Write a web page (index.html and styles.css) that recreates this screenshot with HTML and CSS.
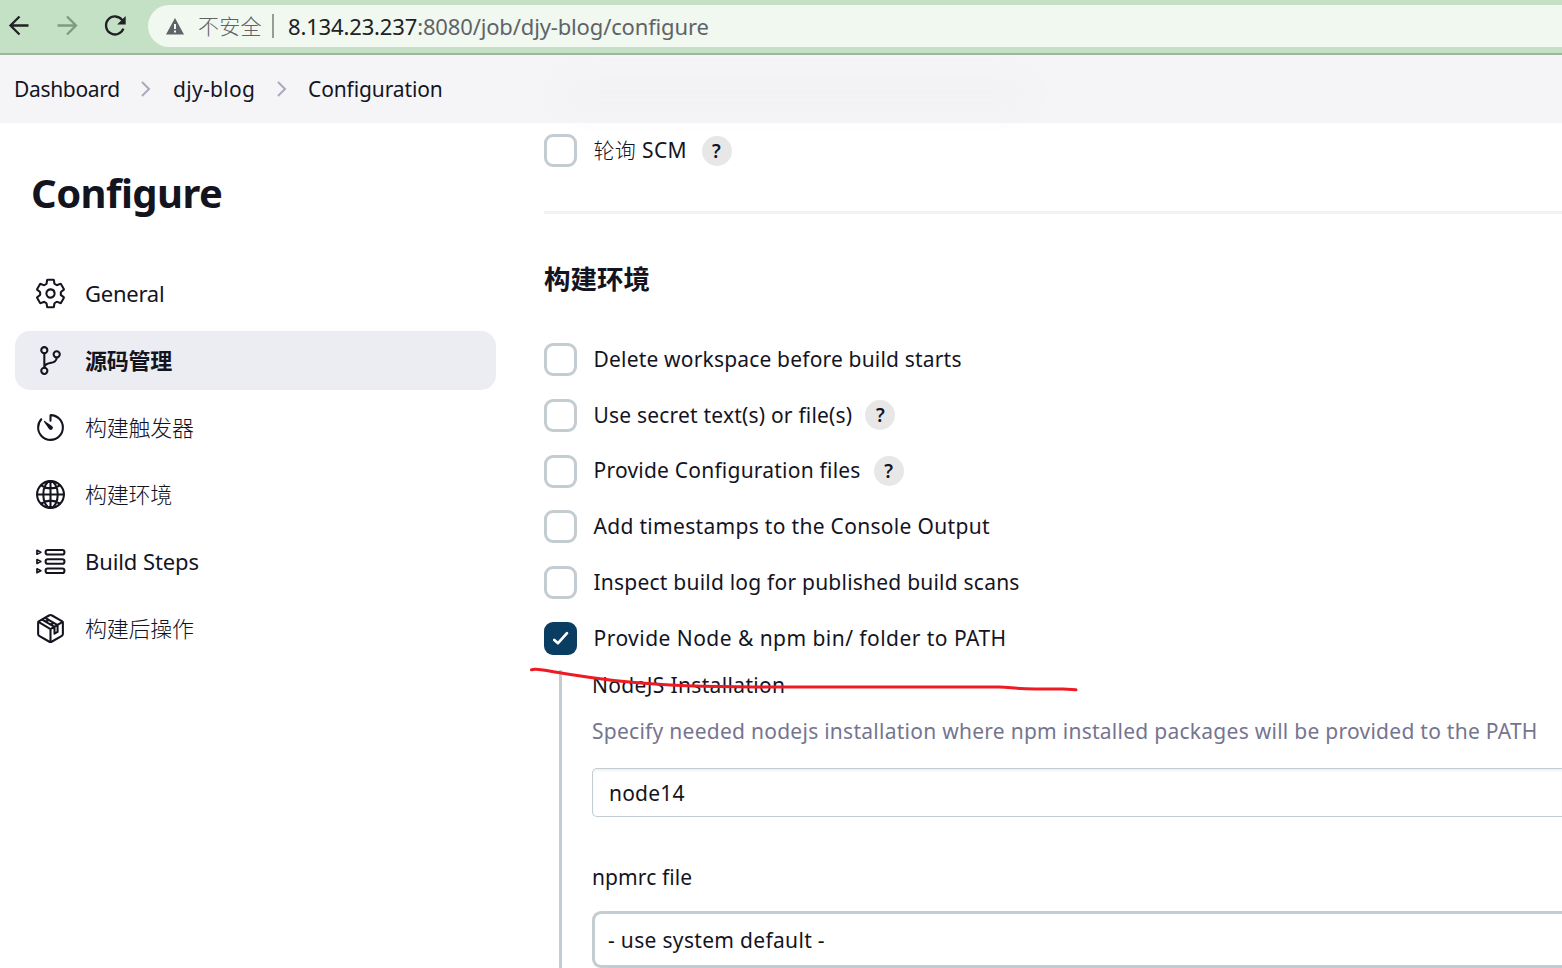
FILE: index.html
```html
<!DOCTYPE html>
<html lang="zh-CN">
<head>
<meta charset="utf-8">
<title>djy-blog Config</title>
<link rel="stylesheet" href="styles.css">
</head>
<body>
<div class="toolbar">
  <svg class="nav-icons" width="148" height="53" viewBox="0 0 148 53" fill="none" stroke-width="2.3">
    <path d="M28.500 25.500H10.500M19.500 16.500L10.500 25.500l9 9" stroke="#202124"/>
    <path d="M57.500 25.500h18M67 16.500l9 9-9 9" stroke="#7f9a83"/>
    <path d="M122.300 20.200A9 9 0 1 0 123.400 28.700" stroke="#202124"/>
    <path d="M125.700 16v8.500h-8.500z" fill="#202124"/>
  </svg>
  <div class="omnibox">
    <svg class="warn" width="18" height="17" viewBox="0 0 18 17"><path d="M9 0L18 16.500H0z" fill="#5f6368"/><path d="M8 6h2v5H8zM8 12.500h2v2H8z" fill="#f0f8f0"/></svg>
    <span class="insecure">不安全</span>
    <span class="divider"></span>
    <span class="url"><b>8.134.23.237</b>:8080/job/djy-blog/configure</span>
  </div>
</div>
<nav class="crumbs">
  <span class="crumb c1">Dashboard</span>
  <svg width="10" height="16" viewBox="0 0 10 16"><path d="M1 1l7 7-7 7"/></svg>
  <span class="crumb c2">djy-blog</span>
  <svg width="10" height="16" viewBox="0 0 10 16"><path d="M1 1l7 7-7 7"/></svg>
  <span class="crumb c3">Configuration</span>
  <span class="smudge"></span>
</nav>
<div class="page">
  <aside class="side">
    <h1>Configure</h1>
    <div class="item"><svg viewBox="0 0 512 512"><path d="M262.290 192.310a64 64 0 1057.400 57.400 64.130 64.130 0 00-57.400-57.400zM416.390 256a154.340 154.340 0 01-1.530 20.790l45.210 35.460a10.810 10.810 0 012.450 13.750l-42.770 74a10.810 10.810 0 01-13.140 4.590l-44.900-18.080a16.110 16.110 0 00-15.170 1.750A164.480 164.480 0 01325 400.800a15.940 15.940 0 00-8.820 12.140l-6.730 47.890a11.080 11.080 0 01-10.680 9.170h-85.540a11.110 11.110 0 01-10.690-8.870l-6.720-47.820a16.070 16.070 0 00-9-12.220 155.300 155.300 0 01-21.460-12.570 16 16 0 00-15.110-1.710l-44.890 18.070a10.810 10.810 0 01-13.140-4.580l-42.770-74a10.800 10.800 0 012.450-13.750l38.210-30a16.050 16.050 0 006-14.080c-.36-4.170-.58-8.330-.58-12.500s.210-8.270.580-12.350a16 16 0 00-6.070-13.940l-38.190-30A10.810 10.810 0 0149.480 186l42.770-74a10.810 10.810 0 0113.140-4.590l44.900 18.080a16.110 16.110 0 0015.170-1.750A164.480 164.480 0 01187 111.200a15.940 15.940 0 008.820-12.140l6.730-47.890A11.080 11.080 0 01213.230 42h85.540a11.110 11.110 0 0110.690 8.870l6.720 47.820a16.070 16.070 0 009 12.220 155.300 155.300 0 0121.460 12.570 16 16 0 0015.110 1.710l44.890-18.070a10.810 10.810 0 0113.140 4.580l42.770 74a10.800 10.800 0 01-2.450 13.750l-38.210 30a16.050 16.050 0 00-6.050 14.080c.33 4.140.55 8.300.55 12.470z"/></svg><span class="g">General</span></div>
    <div class="item active"><svg viewBox="0 0 512 512"><circle cx="160" cy="96" r="48"/><circle cx="160" cy="416" r="48"/><circle cx="352" cy="160" r="48"/><path d="M160 368V144M352 208c0 128-192 48-192 160"/></svg><span>源码管理</span></div>
    <div class="item"><svg viewBox="0 0 512 512"><path d="M112.910 128A191.850 191.850 0 0064 254c-1.180 106.350 85.650 193.800 192 194 106.200.200 192-85.830 192-192 0-104.540-83.550-189.610-187.500-192a4.360 4.360 0 00-4.500 4.370V152"/><path d="M233.380 278.630l-79-113a8.130 8.130 0 0111.320-11.320l113 79a32.500 32.500 0 01-37.250 53.260 33.210 33.210 0 01-8.070-7.940z" fill="#14141f" stroke="none"/></svg><span>构建触发器</span></div>
    <div class="item"><svg viewBox="0 0 512 512"><circle cx="256" cy="256" r="208"/><path d="M256 48c-58 0-112.600 93.310-112.600 208S198 464 256 464s112.600-93.310 112.600-208S314 48 256 48zM117.330 117.330c38.240 27.150 86.380 43.340 138.670 43.340s100.430-16.190 138.670-43.340M394.670 394.670c-38.240-27.150-86.380-43.340-138.670-43.340s-100.430 16.190-138.670 43.340M256 48v416M464 256H48"/></svg><span>构建环境</span></div>
    <div class="item"><svg viewBox="0 0 512 512"><rect x="180" y="78" width="292" height="70" rx="32"/><rect x="180" y="221" width="292" height="70" rx="32"/><rect x="180" y="364" width="292" height="70" rx="32"/><path d="M46 83v60l60-30zM46 226v60l60-30zM46 369v60l60-30z" stroke-width="26"/></svg><span class="bs">Build Steps</span></div>
    <div class="item"><svg viewBox="0 0 512 512"><path d="M448 341.370V170.610A32 32 0 00432.110 143l-152-88.460a47.940 47.940 0 00-48.240 0L79.890 143A32 32 0 0064 170.610v170.760A32 32 0 0079.890 369l152 88.460a48 48 0 0048.240 0l152-88.460A32 32 0 00448 341.370z"/><path d="M69 153.990l187 110 187-110M256 463.990v-200M180 94L366 203M132 122l186 109M318 231v106l48-28V203M181 151l49-28M258 195l49-28"/></svg><span>构建后操作</span></div>
  </aside>
  <main class="content">
    <div class="row poll"><i class="box"></i><span class="scm"><span class="light">轮询</span> SCM</span><b class="help">?</b></div>
    <hr>
    <h2>构建环境</h2>
    <div class="options">
      <div class="row"><i class="box"></i><span class="o1">Delete workspace before build starts</span></div>
      <div class="row"><i class="box"></i><span class="o2">Use secret text(s) or file(s)</span><b class="help">?</b></div>
      <div class="row"><i class="box"></i><span class="o3">Provide Configuration files</span><b class="help">?</b></div>
      <div class="row"><i class="box"></i><span class="o4">Add timestamps to the Console Output</span></div>
      <div class="row"><i class="box"></i><span class="o5">Inspect build log for published build scans</span></div>
      <div class="row"><i class="box checked"><svg width="33" height="33" viewBox="0 0 33 33"><path d="M10.300 18l3.700 3.200 9-10"/></svg></i><span class="o6">Provide Node &amp; npm bin/ folder to PATH</span></div>
    </div>
    <section class="nested">
      <div class="label l1">NodeJS Installation</div>
      <div class="desc">Specify needed nodejs installation where npm installed packages will be provided to the PATH</div>
      <div class="field">node14</div>
      <div class="label l2">npmrc file</div>
      <div class="field select">- use system default -</div>
    </section>
  </main>
</div>
<svg class="mark" width="560" height="40" viewBox="0 0 560 40"><path d="M6.500 9.800Q9 8.500 18 10C60 17 110 27 230 27H474C485 27 490 29 510 29H538L551 29.800"/></svg>
</body>
</html>
```
FILE: styles.css
```css
* { box-sizing: border-box; }
body {
  margin: 0;
  width: 1562px;
  height: 968px;
  overflow: hidden;
  position: relative;
  background: #fff;
  color: #14141f;
  font: 21px/30px "Noto Sans", "Noto Sans CJK SC", sans-serif;
  white-space: nowrap;
}
.toolbar { height: 55px; display: flex; background: #c5e1c5; border-bottom: 2px solid #9fb59f; }
.nav-icons { flex: none; }
.omnibox { flex: 1; height: 42px; margin-top: 5px; padding-left: 18px; border-radius: 21px 0 0 21px; background: #f0f8f0; display: flex; align-items: center; color: #5f6368; }
.insecure { font-family: "Noto Sans CJK SC", sans-serif; font-weight: 300; margin-left: 14px; padding-bottom: 2px; width: 74px; letter-spacing: .3px; }
.divider { width: 2px; height: 24px; background: #969c98; }
.url { margin-left: 14px; padding-bottom: 1px; font-size: 22px; letter-spacing: -.15px; }
.url b { font-weight: 400; color: #202124; }
.crumbs { height: 68px; display: flex; align-items: center; padding-left: 14px; background: #f5f5f8; position: relative; }
.crumbs svg { fill: none; stroke: #a9a9be; stroke-width: 2; flex: none; }
.c1 { width: 127px; letter-spacing: -.33px; }
.c2 { width: 94px; margin-left: 22px; letter-spacing: .32px; }
.c3 { margin-left: 31px; letter-spacing: -.12px; }
.crumbs svg:nth-of-type(2) { margin-left: 10px; margin-right: -10px; }
.smudge { position: absolute; left: 560px; top: 20px; width: 470px; height: 40px; border-radius: 20px; background: #f2f2f4; filter: blur(10px); }
.page { display: flex; height: 845px; }
.side { width: 496px; padding: 45px 0 0 15px; flex: none; }
h1 { margin: 0 0 46px 16px; font-size: 40px; line-height: 50px; font-weight: 700; letter-spacing: -.55px; }
.item { height: 59px; margin-bottom: 8px; padding-left: 19px; display: flex; align-items: center; gap: 18px; border-radius: 15px; font-size: 22px; font-weight: 300; }
.item span { padding-bottom: 2px; letter-spacing: -.25px; }
.item .g, .item .bs { font-weight: 400; }
.item .bs { letter-spacing: -.1px; }
.item svg { width: 33px; height: 33px; fill: none; stroke: #14141f; stroke-width: 32; stroke-linecap: round; stroke-linejoin: round; flex: none; }
.item.active { background: #ecedf3; font-weight: 700; }
.content { margin-left: 48px; flex: 1; min-width: 0; padding-top: 11px; }
.row { height: 33px; display: flex; align-items: center; }
.row > span { padding-bottom: 1.500px; }
.box { width: 33px; height: 33px; border: 3px solid #c3ccd1; border-radius: 9px; margin-right: 16.500px; flex: none; }
.box.checked { border: 0; background: #093e62; }
.box svg { display: block; fill: none; stroke: #fff; stroke-width: 2.700; stroke-linecap: round; stroke-linejoin: round; }
.scm { width: 95px; letter-spacing: .35px; }
.light { font-weight: 300; }
.o1 { letter-spacing: .18px; }
.o2 { letter-spacing: .2px; }
.o3 { letter-spacing: .22px; }
.o4 { letter-spacing: .31px; }
.o5 { letter-spacing: .22px; }
.o6 { letter-spacing: .46px; }
.help { width: 30px; height: 30px; margin-left: 13px; border-radius: 50%; background: #e7e7e7; text-align: center; font-size: 19px; font-weight: 600; }
hr { margin: 44px 0 0; border: 0; height: 3px; background: #f2f2f6; }
h2 { margin: 45px 0 0; height: 40px; font-size: 26.500px; line-height: 40px; }
.options { margin-top: 44px; display: grid; gap: 22.750px; }
.nested { margin: 15px 0 0 15px; height: 298px; padding-left: 30px; border-left: 3px solid #c3ccd1; }
.label { height: 30px; }
.l1 { letter-spacing: .34px; }
.desc { margin-top: 16px; color: #75758f; letter-spacing: .265px; }
.field { height: 49px; margin-top: 22px; padding-left: 16px; line-height: 48px; border: 1px solid #c3ccd1; border-right: 0; border-radius: 5px 0 0 5px; box-shadow: inset 0 2px 2px #f2f2f2; letter-spacing: .2px; }
.l2 { margin-top: 45px; letter-spacing: .1px; }
.select { height: 57px; margin-top: 19px; padding-left: 13px; line-height: 52px; border-width: 3px; border-radius: 9px 0 0 9px; box-shadow: none; letter-spacing: .32px; }
.mark { position: absolute; left: 525px; top: 660px; fill: none; stroke: #ed1c24; stroke-width: 3; stroke-linecap: round; }
```
